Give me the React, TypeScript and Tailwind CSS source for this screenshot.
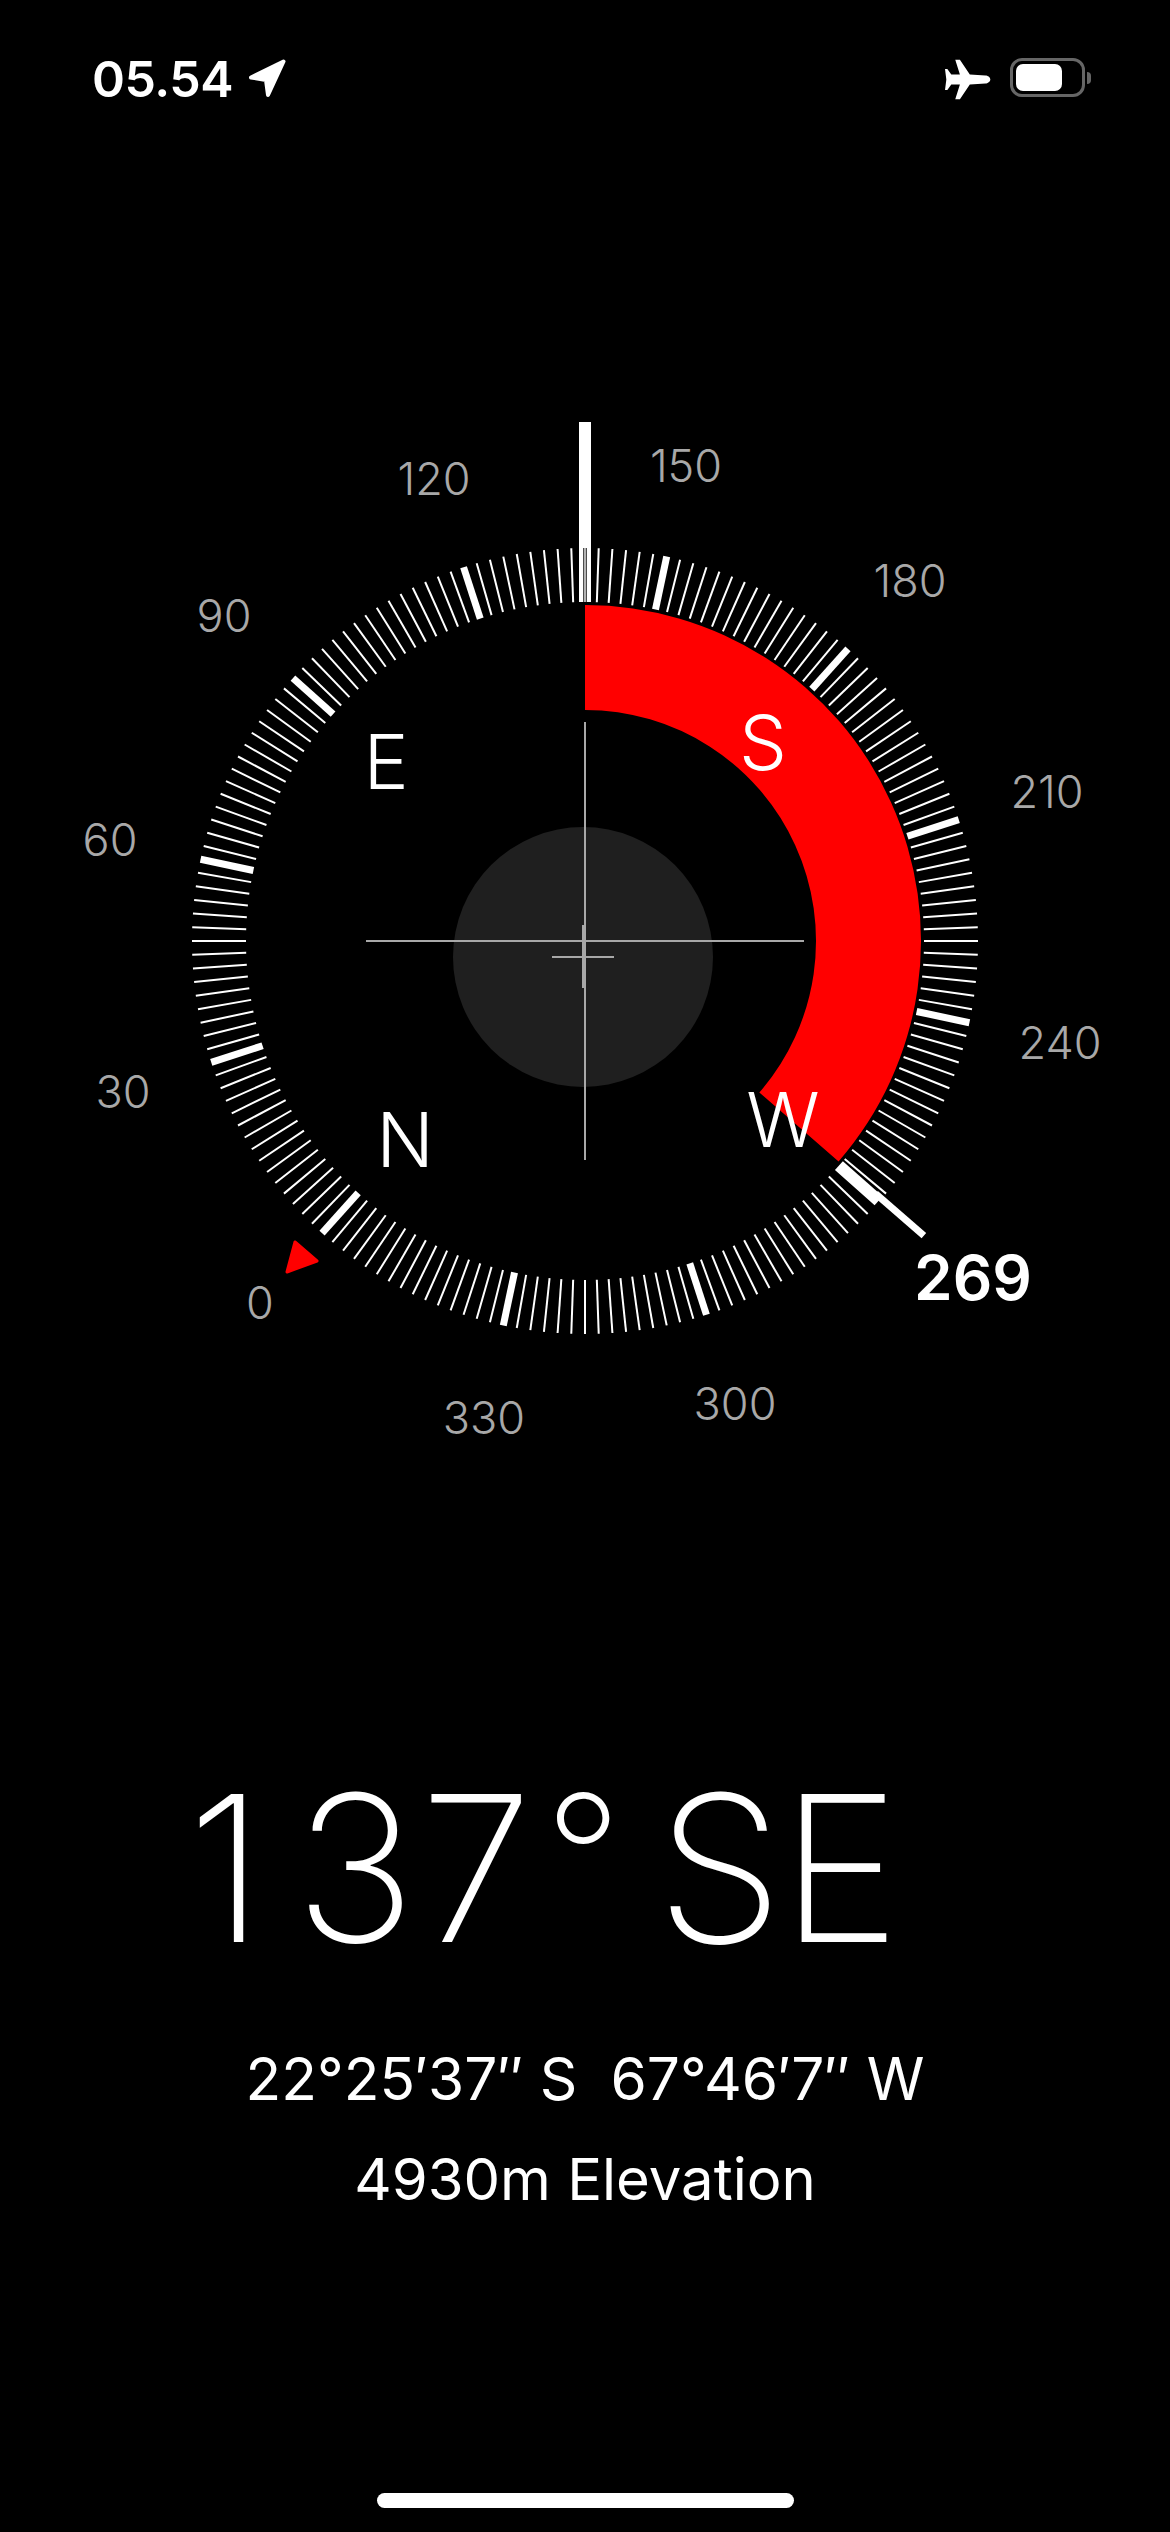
import React from 'react';

const CX = 585;
const CY = 941;

// the heading is 137, so the scale is turned and its 0 sits low on the left
const ticks = Array.from({ length: 180 }, (_, i) => i * 2).filter((b) => b !== 132);

const scaleLabels = [
  { text: '0', x: 260, y: 902 },
  { text: '30', x: 123, y: 691 },
  { text: '60', x: 110, y: 439 },
  { text: '90', x: 224, y: 215 },
  { text: '120', x: 434, y: 78 },
  { text: '150', x: 686, y: 65 },
  { text: '180', x: 910, y: 180 },
  { text: '210', x: 1047, y: 391 },
  { text: '240', x: 1060, y: 642 },
  { text: '300', x: 735, y: 1003 },
  { text: '330', x: 484, y: 1017 },
];

const cardinals = [
  { text: 'E', x: 386, y: 361 },
  { text: 'S', x: 763, y: 342 },
  { text: 'N', x: 405, y: 739 },
  { text: 'W', x: 783, y: 719 },
];

const polar = (r: number, deg: number) => {
  const a = (deg * Math.PI) / 180;
  return `${CX + r * Math.sin(a)} ${CY - r * Math.cos(a)}`;
};

const arcPath = (outer: number, inner: number, end: number) =>
  `M ${polar(outer, 0)} A ${outer} ${outer} 0 0 1 ${polar(outer, end)} L ${polar(inner, end)} A ${inner} ${inner} 0 0 0 ${polar(inner, 0)} Z`;

const StatusBar = () => (
  <div className="flex h-[400px] items-start justify-between pt-[58px] pl-[92px] pr-[79px]">
    <div className="flex items-center gap-[14px]">
      <span className="text-[50px] leading-[40px] font-semibold tracking-[-0.5px]">05.54</span>
      <svg width="40" height="42" viewBox="244 58 40 42">
        <polygon
          points="280.5,61.5 248,77.5 263,80 265,95"
          fill="#fff"
          stroke="#fff"
          strokeWidth="4"
          strokeLinejoin="round"
        />
      </svg>
    </div>
    <div className="flex items-start gap-[18px]">
      <svg width="48" height="43" viewBox="40 35 145 130">
        <path
          d="M180 100c0-7-8-12-15-12l-47-3-30-45H74l14 45-26 0-12-17h-7l4 32-4 32h7l12-17 26 0-14 45h14l30-45 47-3c7 0 15-5 15-12z"
          fill="#fff"
        />
      </svg>
      <div className="flex items-center gap-[2px]">
        <div className="flex h-[39px] w-[75px] items-center rounded-[12px] border-[3px] border-[#666666] pl-[3px]">
          <div className="h-[27px] w-[46px] rounded-[7px] bg-white" />
        </div>
        <div className="h-[12px] w-[4px] rounded-r-full bg-[#666666]" />
      </div>
    </div>
  </div>
);

const Dial = () => (
  <div className="relative h-[1100px]">
    <svg className="absolute inset-0" width="1170" height="1100" viewBox="0 400 1170 1100">
      {ticks.map((b) => {
        const major = (b - 222 + 360) % 30 === 0;
        return (
          <line
            key={b}
            x1={CX}
            x2={CX}
            y1={CY - 393}
            y2={CY - 339}
            stroke="#fff"
            strokeWidth={major ? 7 : 2}
            transform={`rotate(${b} ${CX} ${CY})`}
          />
        );
      })}

      <path d={arcPath(336, 231, 131)} fill="#ff0000" />

      <circle cx="583" cy="957" r="130" fill="#1f1f1f" />
      <rect x="584" y="722" width="2" height="438" fill="#a8a8a8" />
      <rect x="366" y="940" width="438" height="2" fill="#a8a8a8" />
      <rect x="582" y="925" width="2" height="63" fill="#a8a8a8" />
      <rect x="552" y="956" width="62" height="2" fill="#a8a8a8" />

      {/* needle at the top of the dial, the scale tick shows through it */}
      <rect x="579" y="422" width="12" height="180" fill="#fff" />
      <rect x="583.3" y="548" width="3.4" height="54" fill="#000" />
      <rect x="584.3" y="548" width="1.4" height="54" fill="#fff" />

      {/* bearing marker */}
      <line x1={CX} x2={CX} y1={CY - 392} y2={CY - 339} stroke="#fff" strokeWidth="12" transform={`rotate(131.5 ${CX} ${CY})`} />
      <line x1={CX} x2={CX} y1={CY - 449} y2={CY - 385} stroke="#fff" strokeWidth="7" transform={`rotate(131 ${CX} ${CY})`} />

      <polygon
        points="295,1242 317,1261 287,1272"
        fill="#ff0000"
        stroke="#ff0000"
        strokeWidth="3"
        strokeLinejoin="round"
      />
    </svg>

    {scaleLabels.map((l) => (
      <span
        key={l.text}
        className="absolute -translate-x-1/2 -translate-y-1/2 text-[45px] leading-none font-light text-[#a8a8a8]"
        style={{ left: l.x, top: l.y }}
      >
        {l.text}
      </span>
    ))}

    {cardinals.map((c) => (
      <span
        key={c.text}
        className="absolute -translate-x-1/2 -translate-y-1/2 text-[76px] leading-none font-light"
        style={{ left: c.x, top: c.y }}
      >
        {c.text}
      </span>
    ))}

    <span className="absolute top-[878px] left-[973px] -translate-x-1/2 -translate-y-1/2 text-[62px] leading-none font-semibold">
      269
    </span>
  </div>
);

const App = () => {
  return (
    <div className="flex h-[2532px] w-[1170px] flex-col overflow-hidden bg-black text-white [font-family:Inter,sans-serif]">
      <StatusBar />
      <Dial />

      <div className="flex flex-col items-center pt-[266px]">
        <div className="ml-[187px] self-start text-[204px] leading-none font-extralight [word-spacing:-35px]">
          <span className="tracking-[30px]">1</span>
          <span className="tracking-[4px]">3</span>
          <span className="tracking-[12px]">7</span>
          <span className="align-[25px] text-[170px] leading-none tracking-[12px]">°</span>{' '}
          <span className="tracking-[-3px]">SE</span>
        </div>
        <div className="mt-[80px] text-[58.6px] leading-none whitespace-pre">22°25′37″ S  67°46′7″ W</div>
        <div className="mt-[41px] text-[58px] leading-none">4930m Elevation</div>
      </div>

      <div className="mt-auto mb-[24px] h-[15px] w-[417px] self-center rounded-full bg-white" />
    </div>
  );
};

export default App;
